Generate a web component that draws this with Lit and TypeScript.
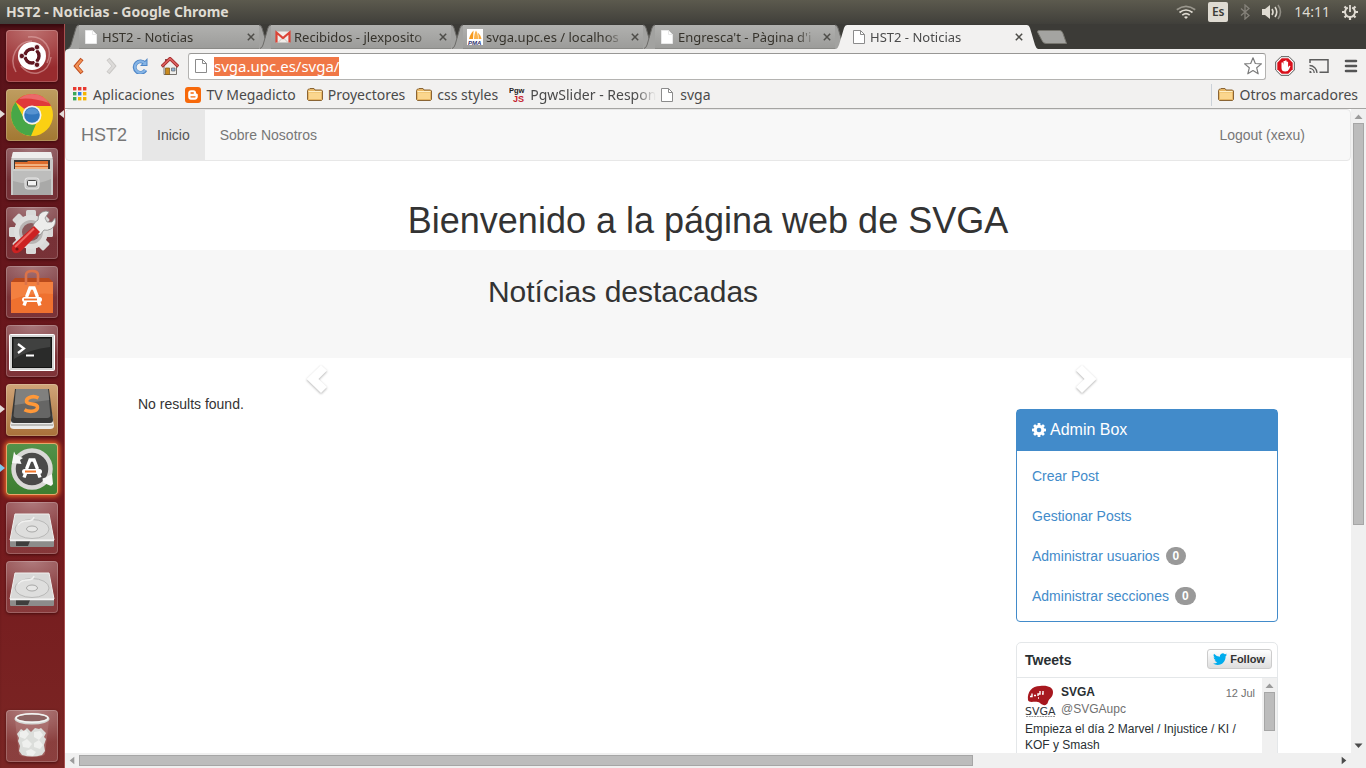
import { LitElement, html, css, svg, nothing, type TemplateResult } from "lit";
import { customElement, property } from "lit/decorators.js";
import { classMap } from "lit/directives/class-map.js";

type Art = TemplateResult;

const icon = (w: number, h: number, body: Art, box = `0 0 ${w} ${h}`) =>
  html`<svg class="icon" width=${w} height=${h} viewBox=${box} aria-hidden="true">${body}</svg>`;

const file = (stroke: string, fill: string) =>
  icon(16, 16, svg`<path d="M2.500 1.500h7l4 4v9h-11z" fill=${fill} stroke=${stroke}/><path d="M9.500 1.500v4h4" fill="none" stroke=${stroke}/>`);

const folder = () =>
  icon(16, 16, svg`<path d="M.5 12.500v-9l1-1.500h1l.5-.5h4l1 1.500h6.500l1 1v8.500l-1 1h-13z" fill="#e8b765" stroke="#8a6434"/><path d="M2 5.500h12v6.500h-12z" fill="#fbd68d"/><path d="M1.500 4.500h13" stroke="#fff0c8"/>`);

const gmail = () =>
  icon(16, 16, svg`<path d="M1 2.500h14v11H1z" fill="#f1ede9"/><path d="M3 13.500l5-5 5 5" fill="none" stroke="#c8c0ba"/><path d="M1.500 13.500V3.500L8 9l6.500-5.500v10" fill="none" stroke="#dc4437" stroke-width="2.200"/>`);

const pma = () =>
  icon(16, 16, svg`<rect width="16" height="16" fill="#fff"/><path d="M2 10C3 6.500 4 4 6.500 1.500L6 10z" fill="#f79a1e"/><path d="M7 10c.2-4 .6-6 2-8.500 1.600 2.500 2 5 2 8.500z" fill="#fbb24a"/><path d="M11.500 10c.3-3 0-4.500-1-6.500 2.500 1.800 3.700 4 4 6.500z" fill="#f9a83a"/><text x="1" y="15.500" font-size="6" font-weight="700" font-style="italic" font-family="Liberation Sans,sans-serif" fill="#31316d">PMA</text>`);

const apps = () => {
  const colors = ["#e8392f", "#e8392f", "#e8392f", "#3aa757", "#2f7de0", "#f5b400", "#3aa757", "#f5b400", "#f5b400"];
  return icon(15, 15, svg`${colors.map((c, i) => svg`<rect x=${(i % 3) * 5} y=${Math.floor(i / 3) * 5} width="3.400" height="3.400" fill=${c}/>`)}`);
};

const blogger = () =>
  icon(16, 16, svg`<rect width="16" height="16" rx="3" fill="#f7690b"/><path d="M6 3.200h2.500c1.600 0 2.500 1.100 2.500 2.600 0 .7.300 1 .9 1 .6 0 .9.300.9 1v1.700c0 1.900-1.200 3.200-3 3.200H6c-1.700 0-2.800-1.200-2.800-3V6c0-1.700 1.200-2.800 2.800-2.800z" fill="#fff"/><path d="M6 6h2.300M6 9.800h4" stroke="#f7690b" stroke-width="1.300" stroke-linecap="round"/>`);

const pgw = () =>
  icon(16, 16, svg`<text x="0" y="6" font-size="7.500" font-weight="700" font-family="Liberation Sans,sans-serif" fill="#222">Pgw</text><text x="4" y="14.500" font-size="9" font-weight="700" font-family="Liberation Sans,sans-serif" fill="#c4202c">JS</text>`);

const cog = () =>
  icon(14, 14, svg`<defs><mask id="hub"><rect width="14" height="14" fill="#fff"/><circle cx="7" cy="7" r="2.300" fill="#000"/></mask></defs><g fill="#fff" mask="url(#hub)"><circle cx="7" cy="7" r="5.300"/>${[0, 45, 90, 135].map((a) => svg`<rect x="5.600" y="0" width="2.800" height="14" rx=".6" transform=${`rotate(${a} 7 7)`}/>`)}</g>`);

const chevron = (flip: boolean) =>
  icon(26, 34, svg`<g transform=${flip ? "translate(26 0) scale(-1 1)" : ""}><path d="M17 2l6 5.500L14.500 16l8.500 8-6 6L2.500 16z" fill="#fff" class="glyph"/></g>`);

/* ---------- launcher artwork, 52px tiles ---------- */

const dash = () => svg`
  <g fill="none" stroke="#e9b9b8" stroke-width="1.500" opacity=".5"><path d="M22 7c16-2 26 12 19 26"/><path d="M45 27c-3 18-20 21-30 9"/><path d="M10 42C2 28 11 11 26 11"/></g>
  <circle cx="26" cy="26" r="14" fill="#fff"/>
  <circle cx="26" cy="26" r="7" fill="none" stroke="#5f1620" stroke-width="3.400"/>
  <g stroke="#fff" stroke-width="1.500"><path d="M26 26H12M26 26l7-12M26 26l7 12"/></g><circle cx="26" cy="26" r="5" fill="#fff"/>
  <g fill="#5f1620" stroke="#fff" stroke-width=".8"><circle cx="15.800" cy="26" r="2.700"/><circle cx="31" cy="17.200" r="2.700"/><circle cx="31" cy="34.800" r="2.700"/></g>`;

const chrome = () => svg`
  <circle cx="26" cy="26" r="21" fill="#fbd013"/>
  <path d="M26 26L9.500 13A21 21 0 0 1 45 17H26z" fill="#e0383a"/>
  <path d="M26 5A21 21 0 0 1 43 14q-17-6-30-4A21 21 0 0 1 26 5z" fill="#f0807f" opacity=".7"/>
  <path d="M9.500 13L17.500 28.500A9.500 9.500 0 0 0 30 35L25 47A21 21 0 0 1 9.500 13z" fill="#47a747"/>
  <circle cx="26" cy="26" r="9.500" fill="#f2f2f2"/><circle cx="26" cy="26" r="7.800" fill="#3277bd"/><path d="M19 24a7.500 7.500 0 0 1 14 0q-7 3-14 0z" fill="#6ea6dd" opacity=".6"/>`;

const cabinet = () => svg`
  <path d="M7 4h38l2 8v35H5V12z" fill="#c9c9c8"/><path d="M7 4h38l1.500 6h-41z" fill="#eeeeed"/>
  <path d="M8 12h36v11H8z" fill="#3a3735"/><path d="M9 14h12l1-1h20v10H9z" fill="#dc6b2b"/><path d="M9 17h33M9 20h33" stroke="#f7c79a" stroke-width="1.500"/>
  <path d="M7 21h38v26H7z" fill="#a9a9a8"/><path d="M7 21h38v2H7z" fill="#dcdcdb"/><path d="M7 21h38v10q-18 8-38 2z" fill="#c6c6c5" opacity=".7"/>
  <rect x="19" y="30" width="14" height="11" rx="2.500" fill="#c9c9c9" stroke="#e8e8e8"/><rect x="21.500" y="32.500" width="9" height="5.500" rx="1" fill="#f2f2f2" stroke="#484848"/>`;

const tools = () => svg`
  <g transform="translate(25 25)"><g fill="#d9d9d8">${[0, 45, 90, 135].map((a) => svg`<rect x="-5" y="-22" width="10" height="44" rx="1.500" transform="rotate(${a})"/>`)}</g><circle r="17" fill="#dededd"/><circle r="12" fill="#b9b5b4"/><circle r="9" fill="#8a5a5c"/></g>
  <path d="M27 24q-1-8 5-11 0-8 8-9l3 1-4 6 2 4 5 0 3-4q2 7-4 11-4 2-7 1l-4 5z" fill="#ececeb" stroke="#8c8c8b" stroke-width=".8"/>
  <path d="M28 19l6 6-19 19q-5 4-8 1-3-4 1-8z" fill="#cc2222"/><path d="M28 21.500L9 40" stroke="#ee6a63" stroke-width="2"/><circle cx="11" cy="42" r="1.600" fill="#7a1212"/>`;

const letterA = () => svg`<path d="M20.500 31l3.500-9h4l3.500 9M18 39.500l1.500-4M34 39.500l-1.500-4" fill="none" stroke="#fff" stroke-width="3.400"/><rect x="16" y="31" width="20" height="5" rx="2.500" fill="#fff"/>`;

const bag = () => svg`
  <path d="M5 16l4-4h34l4 4z" fill="#b94a1c"/><path d="M5 16h42v31H5z" fill="#ef712f"/><path d="M5 16h42v12q-20-2-42 6z" fill="#f58a4d" opacity=".6"/>
  <path d="M20 19V9q0-4 6-4t6 4v10" fill="none" stroke="#dc7349" stroke-width="2.600"/>
  ${letterA()}<path d="M18 33.500h13" stroke="#ef712f" stroke-width="1.800"/>`;

const terminal = () => svg`
  <rect x="3.500" y="9.500" width="45" height="36" rx="1" fill="#d5d5d4" stroke="#fff"/><rect x="6.500" y="12.500" width="39" height="30" fill="#2a2b2a" stroke="#131413"/>
  <path d="M8 14h36v8Q24 24 8 34z" fill="#4a4b4a" opacity=".7"/>
  <path d="M12 19l6 4.500-6 4.500M20 30.500h8" fill="none" stroke="#fff" stroke-width="2.200"/>`;

const sublime = () => svg`
  <path d="M6 29l-2 13q0 3 4 3h36q4 0 4-3l-2-13z" fill="#ececea"/><path d="M5 40h42v2H5z" fill="#bdbdb9"/>
  <path d="M9 5h34l4 31q0 3-3 3H8q-3 0-3-3z" fill="#383837"/><path d="M10 5h32l2.500 27q-1 2-3 2h-31q-2 0-3-2z" fill="#666665"/><path d="M10 5h32l1.200 11q-16 2-34.500 5z" fill="#80807e"/>
  <path d="M32.500 14q-4-2-7.500-1-4.500 1.200-4.500 4 0 2.600 5.500 3 6 .7 5.500 3.800-.5 3-5.500 3.500-4.500.3-7.500-1.500" fill="none" stroke="#ff9838" stroke-width="3.600"/>`;

const updater = () => svg`
  <circle cx="26" cy="26" r="18.500" fill="#4b4a49" stroke="#d9d8d6" stroke-width="4.500"/>
  <path d="M8 8.500l1.500 3L17 15l-3 2 1.500 4L6 20z" fill="#f7f7f6"/><path d="M45 43l-8-3.500-.5-4 3-1L46 31l1 10z" fill="#f7f7f6"/>
  <g transform="translate(0 -5)">${letterA()}<path d="M19 33.500h11" stroke="#f0772c" stroke-width="2"/></g>`;

const drive = () => svg`
  <path d="M9 12h34l5 26H4z" fill="#d8d8d7" stroke="#f0f0ef"/><path d="M4 38h44v6q0 1-1 1H5q-1 0-1-1z" fill="#8c8c8b"/><path d="M10 39h14l-2 5H10z" fill="#3e3e3d"/><path d="M4 38.500h44" stroke="#f4f4f4" stroke-width="1.500"/>
  <ellipse cx="26" cy="27" rx="17" ry="9.500" fill="#dededd" stroke="#b9b9b8"/><path d="M12 23q3-4 9-4 6 0 7-4" stroke="#f0f0ef" stroke-width="1.500" fill="none"/><ellipse cx="26" cy="27" rx="5.500" ry="3" fill="#e7e7e6" stroke="#a8a8a7"/>`;

const trash = () => svg`
  <path d="M9 10l4 34q1 3 13 3t13-3l4-34z" fill="#b98583" opacity=".45"/>
  <path d="M11 24l4-5 3 2 3-3 4 4 4-4 4 1 2-1 5 5-2 4 2 2-2 6 1 6-3 4q-10 3-20 0l-3-4 1-5-2-5 1-3z" fill="#dcdedb"/>
  <g fill="#eff0ee"><path d="M14 22l6-2 3 4-4 5-5-2z"/><path d="M28 22l6-1 3 4-4 5-5-3z"/><path d="M16 32l5-3 5 5-3 4-6-1z"/><path d="M28 33l5-3 4 5-3 4-6-2z"/><path d="M20 41l5-2 5 3-3 4-6-1z"/></g>
  <ellipse cx="26" cy="9" rx="17.500" ry="5.500" fill="#d5d7d4"/><ellipse cx="26" cy="8" rx="15" ry="3.500" fill="#8d6463"/><ellipse cx="26" cy="8" rx="16" ry="4.200" fill="none" stroke="#f3f4f2" stroke-width="1.500"/>`;

@customElement("desktop-launcher")
export class DesktopLauncher extends LitElement {
  static styles = css`
    :host { display: flex; flex-direction: column; gap: 7px; padding: 6px; width: 52px; background: linear-gradient(#58131a, #74191d 65%, #7b2624); border-right: 1px solid #a85050; box-shadow: inset 0 6px 4px -3px #35090d; }
    .tile { position: relative; flex: none; width: 52px; height: 52px; padding: 0; border: 0; border-radius: 4px; background: radial-gradient(60px 34px at 50% 0, rgba(255,255,255,.42), rgba(255,255,255,.12)); box-shadow: inset 0 0 0 1px rgba(255,255,255,.2), 0 1px 3px rgba(40,0,0,.6); }
    .tile svg { display: block; width: 52px; height: 52px; }
    .red { background: radial-gradient(60px 40px at 50% 0, #bd7170, #982b2e); }
    .gold { background: linear-gradient(#bf9d60, #a27832); }
    .brown { background: linear-gradient(#d0a579, #a9713a); }
    .green { background: linear-gradient(#54924a, #3c7d2f); box-shadow: inset 0 0 0 1px #e8a56a, 0 0 4px 2px #d95a24; }
    .running::before { content: ""; position: absolute; left: -6px; top: 21px; border: solid transparent; border-width: 4px 0 4px 5px; border-left-color: #e4dcd9; }
    .green::before { border-left-color: #7dc8ef; }
    .focused::after { content: ""; position: absolute; right: -6px; top: 21px; border: solid transparent; border-width: 4px 5px 4px 0; border-right-color: #e4dcd9; }
    .last { margin-top: auto; }
  `;
  private tiles: { label: string; art: () => Art; cls?: string }[] = [
    { label: "Inicio", art: dash, cls: "red" },
    { label: "Google Chrome", art: chrome, cls: "gold running focused" },
    { label: "Archivos", art: cabinet },
    { label: "Configuración", art: tools },
    { label: "Centro de software", art: bag },
    { label: "Terminal", art: terminal },
    { label: "Sublime Text", art: sublime, cls: "brown running" },
    { label: "Actualización de software", art: updater, cls: "green running" },
    { label: "Disco", art: drive },
    { label: "Disco", art: drive },
    { label: "Papelera", art: trash, cls: "last" },
  ];
  render() {
    return this.tiles.map((t) => html`<button class="tile ${t.cls ?? ""}" aria-label=${t.label}><svg viewBox="0 0 52 52" aria-hidden="true">${t.art()}</svg></button>`);
  }
}

@customElement("scroll-bar")
export class ScrollBar extends LitElement {
  @property({ type: Boolean, reflect: true }) horizontal = false;
  @property({ type: Number }) size = 50;
  static styles = css`
    :host { display: flex; flex-direction: column; width: 15px; background: #f0f0f0; }
    :host([horizontal]) { flex-direction: row; width: auto; height: 15px; }
    .arrow { flex: none; width: 15px; height: 14px; display: block; }
    :host([horizontal]) .arrow { width: 14px; height: 15px; }
    .track { flex: 1; min-width: 0; min-height: 0; padding: 0 2px; }
    :host([horizontal]) .track { padding: 2px 0; }
    .thumb { box-sizing: border-box; background: #bcbcbc; border: 1px solid #a6a6a6; height: 100%; }
  `;
  render() {
    const h = this.horizontal;
    return html`
      <svg class="arrow" viewBox="0 0 15 14" aria-hidden="true"><path d=${h ? "M10 3v8L5 7z" : "M3.500 10h8L7.500 5.500z"} fill="#9b9b9b"/></svg>
      <div class="track"><div class="thumb" style=${h ? `width:${this.size}%` : `height:${this.size}%`}></div></div>
      <svg class="arrow" viewBox="0 0 15 14" aria-hidden="true"><path d=${h ? "M5 3v8l5-4z" : "M3.500 4.500h8L7.500 9z"} fill="#4b4b4b"/></svg>`;
  }
}

@customElement("browser-chrome")
export class BrowserChrome extends LitElement {
  static styles = css`
    :host { display: block; font-family: "Noto Sans", "Open Sans", sans-serif; font-size: 14px; color: #4a4a4a; background: #3c3b37; }
    button { border: 0; padding: 0; background: none; font: inherit; color: inherit; }
    .icon { display: block; flex: none; }
    .tabs { display: flex; height: 25px; padding-left: 3px; font-size: 13px; }
    .tab { display: flex; flex: none; width: 202px; margin-right: -10px; color: #36332c; position: relative; --fill: #a2a2a0; }
    .tab.active { --fill: #f2f1f0; color: #4b4b4b; z-index: 6; }
    .edge { display: block; width: 11px; height: 25px; flex: none; }
    .edge path { fill: var(--fill); }
    .edge .line { fill: none; stroke: #6c6b68; }
    .active .line { stroke: none; }
    .face { flex: 1; min-width: 0; display: flex; align-items: center; gap: 3px; margin-top: 1px; padding: 0 0 0 4px; background: linear-gradient(#b1b1af, #9c9c9a); border-bottom: 1px solid #8a8a87; }
    .active .face { background: #f2f1f0; border-color: #f2f1f0; }
    .name { flex: 1; min-width: 0; overflow: hidden; white-space: nowrap; text-align: left; line-height: 20px; -webkit-mask-image: linear-gradient(90deg, #000 86%, transparent); }
    .close { display: grid; place-items: center; width: 16px; height: 16px; }
    .new { align-self: center; margin-left: 9px; }
    .toolbar { display: flex; align-items: center; height: 34px; padding: 0 7px 0 1px; background: #f2f1f0; border-radius: 4px 0 0 0; }
    .nav { display: grid; place-items: center; width: 30px; height: 28px; flex: none; }
    .nav.first { width: 26px; margin-right: 3px; }
    .omnibox { flex: 1; display: flex; align-items: center; gap: 5px; height: 25px; margin: 0 9px 0 3px; padding: 0 3px 0 4px; background: #fff; border: 1px solid #b4b3b1; border-top-color: #989795; border-radius: 3px; }
    .spacer { flex: 1; }
    .url { field-sizing: content; width: auto; height: 19px; box-sizing: border-box; border: 0; outline: 0; padding: 0; background: #f07746; color: #fff; font: 15px/19px "Noto Sans", sans-serif; }
    .tools { display: flex; align-items: center; gap: 14px; }
    .bookmarks { display: flex; align-items: center; gap: 11px; height: 23px; padding: 0 8px 2px; background: #f2f1f0; border-bottom: 1px solid #a5a4a2; }
    .bookmark { display: flex; align-items: center; gap: 5px; color: inherit; text-decoration: none; white-space: nowrap; line-height: 20px; }
    .fade { width: 126px; margin-right: -8px; overflow: hidden; -webkit-mask-image: linear-gradient(90deg, #000 84%, transparent); }
    .other { margin-left: auto; border-left: 1px solid #cbd1d8; padding-left: 6px; height: 22px; }
  `;

  private tab(label: string, mark: Art, active = false) {
    return html`<div class=${classMap({ tab: true, active })}>
      <svg class="edge" viewBox="0 0 11 25" aria-hidden="true"><path d="M0 25Q2 24 3 21L8 4Q9 1 11 1V25z"/><path class="line" d="M0 24.500Q2 24 3 21L8 4Q9 1 11 1"/></svg>
      <div class="face">${mark}<span class="name">${label}</span>
        <button class="close" aria-label="Cerrar">${icon(8, 8, svg`<path d="M.8.8l6.400 6.400M7.200.8L.8 7.200" stroke="#4e4d49" stroke-width="1.500"/>`)}</button></div>
      <svg class="edge" viewBox="0 0 11 25" aria-hidden="true"><path d="M11 25Q9 24 8 21L3 4Q2 1 0 1V25z"/><path class="line" d="M11 24.500Q9 24 8 21L3 4Q2 1 0 1"/></svg>
    </div>`;
  }

  private bookmark(label: string, mark: Art, fade = false) {
    return html`<a class="bookmark" href="#">${mark}<span class=${fade ? "fade" : ""}>${label}</span></a>`;
  }

  render() {
    return html`
      <div class="tabs">
        ${this.tab("HST2 - Noticias", file("#e8e8e8", "#fff"))}
        ${this.tab("Recibidos - jlexposito", gmail())}
        ${this.tab("svga.upc.es / localhos", pma())}
        ${this.tab("Engresca't - Pàgina d'i", file("#e8e8e8", "#fff"))}
        ${this.tab("HST2 - Noticias", file("#8b8b8b", "#fff"), true)}
        <button class="new" aria-label="Nueva pestaña">${icon(30, 14, svg`<path d="M2 .5h21q2 0 3 3l3.500 10H9q-3 0-4-3L.5 2Q.3.500 2 .5z" fill="#a4a4a1" stroke="#77766f"/>`)}</button>
      </div>
      <div class="toolbar">
        <button class="nav first" aria-label="Atrás">${icon(16, 18, svg`<path d="M11 2L5 9l6 7" fill="none" stroke="#bd4a1d" stroke-width="4"/><path d="M10.600 2.700L5.200 9l5.400 6.300" fill="none" stroke="#f29154" stroke-width="2.200"/>`)}</button>
        <button class="nav" aria-label="Adelante">${icon(16, 18, svg`<path d="M6 2l6 7-6 7" fill="none" stroke="#c9c7c5" stroke-width="4"/><path d="M6.400 2.700L11.800 9l-5.400 6.300" fill="none" stroke="#dddbd9" stroke-width="2.200"/>`)}</button>
        <button class="nav" aria-label="Recargar">${icon(16, 16, svg`<path d="M13 5.500A5.800 5.800 0 1 0 13.500 12" fill="none" stroke="#4f86c6" stroke-width="3.800"/><path d="M15.500 0v8H8z" fill="#4f86c6"/><path d="M12.500 5A5.600 5.600 0 1 0 13.300 12" fill="none" stroke="#86b5e6" stroke-width="2.200"/><path d="M14.500 2.500V7H10z" fill="#86b5e6"/>`)}</button>
        <button class="nav" aria-label="Página principal">${icon(18, 18, svg`<path d="M3 9v8.500h12.500V9L9 3z" fill="#efeeec" stroke="#77736e"/><path d="M4 2h2.500v4H4z" fill="#8c4d4a"/><path d="M.7 9.500L9 1.500l8.300 8" fill="none" stroke="#a52c2c" stroke-width="3.200"/><path d="M1.200 9L9 1.700 16.800 9" fill="none" stroke="#db6060" stroke-width="1.700"/><path d="M4.500 11h4v6.500h-4z" fill="#c98a1e" stroke="#7d5512" stroke-width=".7"/><path d="M10.500 11h3.500v3h-3.500z" fill="#8fb3d6" stroke="#666" stroke-width=".7"/>`)}</button>
        <div class="omnibox">
          ${file("#8b8b8b", "#fff")}
          <input class="url" type="text" aria-label="Dirección" .value=${"svga.upc.es/svga/"} spellcheck="false" />
          <span class="spacer"></span>
          <button aria-label="Añadir a marcadores">${icon(18, 18, svg`<path d="M9 .8l2.300 5.700 6.100.4-4.700 3.900 1.500 6L9 13.500l-5.200 3.300 1.500-6L.6 6.900l6.100-.4z" fill="#fff" stroke="#7c7c7c" stroke-width="1.200" stroke-linejoin="round"/>`)}</button>
        </div>
        <div class="tools">
          <button aria-label="Bloqueador">${icon(20, 20, svg`<path d="M6 .7h8L19.300 6v8L14 19.300H6L.7 14V6z" fill="#fff" stroke="#555"/><path d="M6.700 2.300h6.600l4.400 4.400v6.600l-4.400 4.400H6.700l-4.400-4.400V6.700z" fill="#d9101b"/><path d="M6.500 8.500V12q0 3.500 3.700 3.500 3 0 4-2.500l1.300-3-1.400-.3-1 1.800V5.800h-1.500v3V4.500H10v4V5H8.500v4L8 6.500H6.500z" fill="#fff"/>`)}</button>
          <button aria-label="Enviar">${icon(20, 16, svg`<path d="M1 5V1.700h18v12.600h-8.500" fill="none" stroke="#5d5d5d" stroke-width="1.500"/><g fill="none" stroke="#5d5d5d" stroke-width="1.300"><path d="M.5 7.500a7.500 7.500 0 0 1 7.500 7.500M.5 10.300A4.700 4.700 0 0 1 5.200 15"/></g><path d="M.5 12.800A2.200 2.200 0 0 1 2.700 15H.5z" fill="#5d5d5d"/>`)}</button>
          <button aria-label="Menú">${icon(16, 14, svg`<path d="M3 2h10M3 7h10M3 12h10" stroke="#555" stroke-width="2.600" stroke-linecap="round"/>`)}</button>
        </div>
      </div>
      <nav class="bookmarks">
        ${this.bookmark("Aplicaciones", apps())}
        ${this.bookmark("TV Megadicto", blogger())}
        ${this.bookmark("Proyectores", folder())}
        ${this.bookmark("css styles", folder())}
        ${this.bookmark("PgwSlider - Respon", pgw(), true)}
        ${this.bookmark("svga", file("#8b8b8b", "#fff"))}
        <a class="bookmark other" href="#">${folder()}<span>Otros marcadores</span></a>
      </nav>`;
  }
}

@customElement("site-page")
export class SitePage extends LitElement {
  static styles = css`
    :host { display: block; overflow: hidden; background: #fff; font: 14px/20px "Liberation Sans", Arial, sans-serif; color: #333; }
    a { color: #428bca; text-decoration: none; }
    .icon { display: block; flex: none; overflow: visible; }
    .navbar { display: flex; align-items: stretch; height: 50px; border: 1px solid #e7e7e7; border-radius: 4px; background: #f8f8f8; padding-right: 30px; }
    .navbar a { display: flex; align-items: center; padding: 0 15px; color: #777; }
    .navbar .brand { font-size: 18px; }
    .navbar .current { background: #e7e7e7; color: #555; }
    .navbar .logout { margin-left: auto; }
    h1 { margin: 40px 0 9px; font-size: 36px; line-height: 40px; font-weight: 400; text-align: center; }
    .band { height: 108px; box-sizing: border-box; padding: 25px 170px 0 0; background: #f7f7f7; text-align: center; }
    h2 { margin: 0; font-size: 30px; line-height: 34px; font-weight: 400; }
    .arrows { display: flex; justify-content: space-between; padding: 5px 252px 0 239px; height: 31px; }
    .arrows button { border: 0; background: none; padding: 0; }
    .glyph { filter: drop-shadow(0 1px 1px rgba(0,0,0,.3)); }
    .container { display: grid; grid-template-columns: 1fr 262px; gap: 30px; max-width: 1140px; margin: 0 auto; padding: 0 15px; }
    .empty { margin: 0; }
    .side { display: flex; flex-direction: column; gap: 20px; padding-top: 15px; }
    .panel { border: 1px solid #428bca; border-radius: 4px; }
    .panel h3 { display: flex; align-items: center; gap: 4px; margin: 0; padding: 11px 15px 12px; background: #428bca; color: #fff; font-size: 16px; line-height: 18px; font-weight: 400; }
    .links { display: flex; flex-direction: column; gap: 20px; padding: 15px; }
    .links a { display: flex; align-items: center; gap: 6px; }
    .badge { background: #999; color: #fff; border-radius: 10px; padding: 3px 7px; font-size: 12px; line-height: 12px; font-weight: 700; }
    .tweets { border: 1px solid #e4e7e9; border-radius: 5px; color: #292f33; font-size: 12px; line-height: 16px; }
    .head { display: flex; align-items: center; justify-content: space-between; height: 34px; padding: 0 5px 0 8px; border-bottom: 1px solid #e4e7e9; }
    h4 { margin: 0; font-size: 14px; font-weight: 700; }
    .follow { display: flex; align-items: center; gap: 3px; height: 20px; margin-bottom: 2px; padding: 0 6px 0 5px; border: 1px solid #ccc; border-radius: 3px; background: linear-gradient(#fff, #dedede); color: #333; font: 700 11px/18px "Liberation Sans", Arial, sans-serif; }
    .feed { display: flex; height: 150px; }
    article { flex: 1; padding: 6px 7px 0 8px; }
    .author { display: grid; grid-template-columns: 31px 1fr auto; column-gap: 5px; align-items: start; margin-bottom: 3px; }
    .author svg { margin-top: 2px; }
    .who { display: flex; flex-direction: column; line-height: 17px; }
    .who span, .author time { color: #707070; }
    .author time { font-size: 11px; line-height: 19px; }
    article p { margin: 0; }
  `;
  render() {
    const sections = [["Crear Post"], ["Gestionar Posts"], ["Administrar usuarios", "0"], ["Administrar secciones", "0"]];
    return html`
      <nav class="navbar">
        <a class="brand" href="#">HST2</a><a class="current" href="#">Inicio</a><a href="#">Sobre Nosotros</a><a class="logout" href="#">Logout (xexu)</a>
      </nav>
      <h1>Bienvenido a la página web de SVGA</h1>
      <div class="band"><h2>Notícias destacadas</h2></div>
      <div class="arrows"><button aria-label="Anterior">${chevron(false)}</button><button aria-label="Siguiente">${chevron(true)}</button></div>
      <div class="container">
        <p class="empty">No results found.</p>
        <aside class="side">
          <section class="panel">
            <h3>${cog()}Admin Box</h3>
            <div class="links">${sections.map(([label, n]) => html`<a href="#">${label}${n ? html`<span class="badge">${n}</span>` : nothing}</a>`)}</div>
          </section>
          <section class="tweets">
            <div class="head"><h4>Tweets</h4>
              <button class="follow">${icon(14, 12, svg`<path d="M14 1.500q-.7.400-1.600.5.800-.5 1.200-1.500-.9.500-1.800.7A2.900 2.900 0 0 0 6.900 3.800Q3.400 3.700 1 .8-.2 3.200 1.900 4.700L.6 4.300q.1 2.200 2.300 2.900l-1.300.1q.6 1.700 2.700 2Q2.500 10.700 0 10.500 2 11.900 4.500 11.900c5.200 0 8.200-4.200 8.100-8.700Q13.400 2.600 14 1.500z" fill="#00aced"/>`)}Follow</button>
            </div>
            <div class="feed">
              <article>
                <div class="author">
                  ${icon(31, 31, svg`<path d="M3 14C2 6 7 0 15 0c7-1 13 1 13 6 0 6-4 6-5 10-1 4-5 4-8 1-4-3-11 1-12-3z" fill="#a7181f"/><path d="M5 10.500h2V7.500M9 9.500h2M13 10V8h2V5M17 8h1V5M13 12h1" stroke="#fff" stroke-width="1.400" fill="none"/><text x="0" y="28.500" font-size="11" font-family="DejaVu Sans,sans-serif" fill="#30343a">SVGA</text><path d="M1 30.500h29" stroke="#999" stroke-dasharray="2 .7"/>`)}
                  <div class="who"><b>SVGA</b><span>@SVGAupc</span></div>
                  <time>12 Jul</time>
                </div>
                <p>Empieza el día 2 Marvel / Injustice / KI / KOF y Smash</p>
              </article>
              <scroll-bar size="32"></scroll-bar>
            </div>
          </section>
        </aside>
      </div>`;
  }
}

@customElement("app-root")
export class AppRoot extends LitElement {
  static styles = css`
    :host { display: grid; grid-template-rows: 24px 1fr; height: 100vh; overflow: hidden; }
    .panel { display: flex; align-items: center; justify-content: space-between; padding: 0 8px 0 6px; background: linear-gradient(#5c5a4e, #403f3a); color: #dfdbd2; font: 14px/24px "Noto Sans", sans-serif; }
    .title { font-weight: 700; }
    .tray { display: flex; align-items: center; gap: 12px; }
    .icon { display: block; }
    .lang { width: 20px; height: 20px; line-height: 20px; text-align: center; background: #dfdbd2; color: #3c3b37; border-radius: 2px; font-size: 12px; font-weight: 600; }
    .desktop { display: grid; grid-template-columns: auto 1fr; min-height: 0; }
    .window { display: grid; grid-template: auto 1fr auto / 1fr auto; min-width: 0; min-height: 0; background: #f0f0f0; }
    .top { grid-column: 1 / -1; }
    .page { min-height: 0; min-width: 0; }
  `;
  render() {
    return html`
      <header class="panel">
        <span class="title">HST2 - Noticias - Google Chrome</span>
        <div class="tray">
          ${icon(20, 14, svg`<g fill="none" stroke="#dfdbd2" stroke-width="1.700"><path d="M.8 4.800q9.200-7 18.400 0" opacity=".5"/><path d="M3.500 7.500q6.500-5 13 0"/><path d="M6.300 10.200q3.700-3 7.400 0"/></g><path d="M8 12q2-1.500 4 0l-2 2z" fill="#dfdbd2"/>`)}
          <span class="lang">Es</span>
          ${icon(10, 16, svg`<path d="M1 4.500l8 7L5 15V1l4 3.500-8 7" fill="none" stroke="#85827a" stroke-width="1.300"/>`)}
          ${icon(20, 16, svg`<path d="M0 5h3l5-4v14l-5-4H0z" fill="#dfdbd2"/><g fill="none" stroke="#dfdbd2" stroke-width="1.600"><path d="M10 5q2 3 0 6M13 3q3.500 5 0 10"/><path d="M16 1q5 7 0 14" opacity=".45"/></g>`)}
          <time>14:11</time>
          ${icon(16, 16, svg`<g fill="none" stroke="#dfdbd2"><path d="M5.800 3.600A5 5 0 1 0 10.200 3.600" stroke-width="2"/><path d="M8 1v7" stroke-width="1.800"/><path d="M8 13v3M13 8h3M0 8h3M11.500 11.500l2 2M4.500 11.500l-2 2M2.500 2.500l2 2M13.500 2.500l-2 2" stroke-width="2.200"/></g>`)}
        </div>
      </header>
      <div class="desktop">
        <desktop-launcher></desktop-launcher>
        <main class="window">
          <browser-chrome class="top"></browser-chrome>
          <site-page class="page"></site-page>
          <scroll-bar size="65.3"></scroll-bar>
          <scroll-bar horizontal size="71.1"></scroll-bar>
        </main>
      </div>`;
  }
}
